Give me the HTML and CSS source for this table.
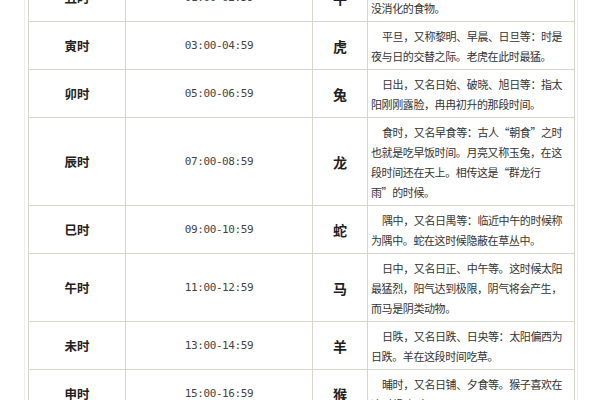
FILE: index.html
```html
<!DOCTYPE html>
<html lang="zh">
<head>
<meta charset="utf-8">
<link rel="stylesheet" href="styles.css">
</head>
<body>
<div class="frame">
<table class="shichen">
<colgroup>
<col class="c-name"><col class="c-time"><col class="c-animal"><col class="c-desc">
</colgroup>
<tbody>
<tr><td class="name">丑时</td><td class="time">01:00-02:59</td><td class="animal">牛</td><td class="desc"><p>鸡鸣，又名荒鸡：牛在这时开始反刍<br>没消化的食物。</p></td></tr>
<tr><td class="name">寅时</td><td class="time">03:00-04:59</td><td class="animal">虎</td><td class="desc"><p>平旦，又称黎明、早晨、日旦等：时是<br>夜与日的交替之际。老虎在此时最猛。</p></td></tr>
<tr><td class="name">卯时</td><td class="time">05:00-06:59</td><td class="animal">兔</td><td class="desc"><p>日出，又名日始、破晓、旭日等：指太<br>阳刚刚露脸，冉冉初升的那段时间。</p></td></tr>
<tr><td class="name">辰时</td><td class="time">07:00-08:59</td><td class="animal">龙</td><td class="desc"><p>食时，又名早食等：古人“朝食”之时<br>也就是吃早饭时间。月亮又称玉兔，在这<br>段时间还在天上。相传这是“群龙行<br>雨”的时候。</p></td></tr>
<tr><td class="name">巳时</td><td class="time">09:00-10:59</td><td class="animal">蛇</td><td class="desc"><p>隅中，又名日禺等：临近中午的时候称<br>为隅中。蛇在这时候隐蔽在草丛中。</p></td></tr>
<tr><td class="name">午时</td><td class="time">11:00-12:59</td><td class="animal">马</td><td class="desc"><p>日中，又名日正、中午等。这时候太阳<br>最猛烈，阳气达到极限，阴气将会产生，<br>而马是阴类动物。</p></td></tr>
<tr><td class="name">未时</td><td class="time">13:00-14:59</td><td class="animal">羊</td><td class="desc"><p>日昳，又名日跌、日央等：太阳偏西为<br>日跌。羊在这段时间吃草。</p></td></tr>
<tr><td class="name">申时</td><td class="time">15:00-16:59</td><td class="animal">猴</td><td class="desc"><p>晡时，又名日铺、夕食等。猴子喜欢在<br>这时候啼叫。</p></td></tr>
</tbody>
</table>
</div>
</body>
</html>
```

FILE: styles.css
```css
html, body {
  margin: 0;
  padding: 0;
  background: #ffffff;
}
body {
  width: 600px;
  height: 400px;
  overflow: hidden;
  font-family: "Noto Sans CJK SC", "Liberation Sans", sans-serif;
}
.frame {
  margin: -31px 0 0 24px;
  width: 546px;
  padding: 3px;
  border: 1px solid #ededea;
}
.shichen {
  width: 546px;
  table-layout: fixed;
  border-collapse: collapse;
}
.c-name { width: 97px; }
.c-time { width: 187px; }
.c-animal { width: 55px; }
.c-desc { width: 207px; }
.shichen td {
  border: 1px solid #d8d5ca;
  padding: 3.5px 0;
  line-height: 20px;
  text-align: center;
  vertical-align: middle;
  color: #2a2a2a;
}
.shichen td.name {
  font-size: 12.5px;
  font-weight: 700;
  color: #222;
}
.shichen td.time {
  font-family: "DejaVu Sans Mono", "Liberation Mono", monospace;
  font-size: 11px;
  letter-spacing: -0.4px;
  color: #444;
}
.shichen td.animal {
  font-size: 14px;
  font-weight: 700;
  color: #1f1f1f;
}
.shichen td.desc {
  text-align: left;
  padding-left: 3px;
  padding-right: 0;
}
.desc p {
  margin: 0;
  font-size: 11px;
  letter-spacing: -0.4px;
  text-indent: 11px;
  white-space: nowrap;
  color: #333;
}
```
